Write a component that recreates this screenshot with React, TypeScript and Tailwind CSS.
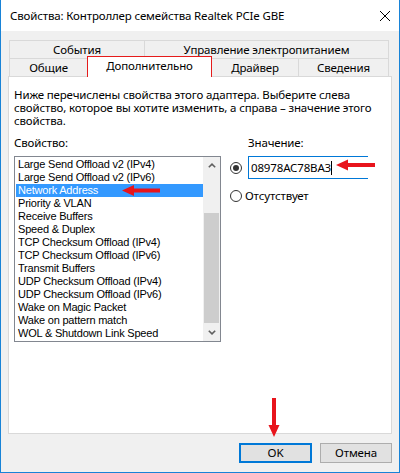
const items = [
  "Large Send Offload v2 (IPv4)",
  "Large Send Offload v2 (IPv6)",
  "Network Address",
  "Priority & VLAN",
  "Receive Buffers",
  "Speed & Duplex",
  "TCP Checksum Offload (IPv4)",
  "TCP Checksum Offload (IPv6)",
  "Transmit Buffers",
  "UDP Checksum Offload (IPv4)",
  "UDP Checksum Offload (IPv6)",
  "Wake on Magic Packet",
  "Wake on pattern match",
  "WOL & Shutdown Link Speed",
];

function Chevron({ up }: { up?: boolean }) {
  return (
    <svg width="8" height="5" viewBox="0 0 8 5">
      <path
        d={up ? "M0.8 4.3L4 1.2L7.2 4.3" : "M0.8 0.8L4 3.9L7.2 0.8"}
        fill="none"
        stroke="#606060"
        strokeWidth="1.6"
      />
    </svg>
  );
}

export default function App() {
  return (
    <div className="relative w-[400px] h-[473px] bg-[#f0f0f0] border-x border-b border-[#1883d7] flex flex-col font-['Noto_Sans',sans-serif] text-[11.5px] tracking-[-0.15px] text-black overflow-hidden">
      {/* Title bar */}
      <div className="h-[31px] shrink-0 bg-white flex items-center justify-between pl-[9px] pr-[9px]">
        <span className="leading-[14px]">Свойства: Контроллер семейства Realtek PCIe GBE</span>
        <svg width="10" height="10" viewBox="0 0 10 10">
          <path d="M0 0L10 10M10 0L0 10" stroke="#000" strokeWidth="1" />
        </svg>
      </div>

      {/* Body */}
      <div className="flex-1 flex flex-col pt-[9px] px-[7px]">
        {/* Tabs */}
        <div className="ml-[1px] w-[380px] flex flex-col">
          <div className="flex h-[18px]">
            <div className="w-[135px] border-t border-l border-[#d9d9d9] flex justify-center leading-[16px] pt-[1px]">События</div>
            <div className="flex-1 border-t border-l border-r border-[#d9d9d9] flex justify-center leading-[16px] pt-[1px]">Управление электропитанием</div>
          </div>
          <div className="flex h-[18px] items-start">
            <div className="w-[78px] h-[18px] border-t border-l border-[#d9d9d9] flex justify-center leading-[16px] pt-[1px]">Общие</div>
            <div className="relative z-10 w-[125px] h-[21px] -mt-[2px] bg-white border-t border-l border-r border-[#e51b1b] flex justify-center leading-[16px] pt-[1px]">Дополнительно</div>
            <div className="w-[86px] h-[18px] border-t border-[#d9d9d9] flex justify-center leading-[16px] pt-[1px]">Драйвер</div>
            <div className="flex-1 h-[18px] border-t border-l border-r border-[#d9d9d9] flex justify-center leading-[16px] pt-[1px]">Сведения</div>
          </div>
        </div>

        {/* Panel */}
        <div className="h-[358px] bg-white border border-[#d9d9d9] pl-[5px] pt-[11px]">
          <p className="leading-[13px] whitespace-nowrap">
            Ниже перечислены свойства этого адаптера. Выберите слева
            <br />
            свойство, которое вы хотите изменить, а справа – значение этого
            <br />
            свойства.
          </p>

          <div className="mt-[9px] flex gap-[9px]">
            {/* Left column */}
            <div className="w-[207px] flex flex-col">
              <div className="leading-[13px]">Свойство:</div>
              <div className="mt-[7px] h-[186px] border border-[#828790] bg-white flex">
                <div className="flex-1 pt-[1px] pl-[1px] font-['Liberation_Sans',Arial,sans-serif] text-[11px] tracking-[-0.2px]">
                  {items.map((it, i) => (
                    <div
                      key={it}
                      className={
                        i === 2
                          ? "h-[13px] leading-[13px] pl-[2px] whitespace-nowrap bg-[#3399ff] text-white"
                          : "h-[13px] leading-[13px] pl-[2px] whitespace-nowrap"
                      }
                    >
                      {it}
                    </div>
                  ))}
                </div>
                <div className="w-[17px] bg-[#f0f0f0] flex flex-col">
                  <div className="h-[17px] flex items-center justify-center">
                    <Chevron up />
                  </div>
                  <div className="h-[39px]" />
                  <div className="h-[110px] mx-[1px] bg-[#cdcdcd]" />
                  <div className="flex-1" />
                  <div className="h-[17px] flex items-center justify-center">
                    <Chevron />
                  </div>
                </div>
              </div>
            </div>

            {/* Right column */}
            <div className="flex-1 flex flex-col">
              <div className="leading-[13px] pl-[18px]">Значение:</div>
              <div className="mt-[7px] flex items-center h-[23px]">
                <div className="w-[12px] h-[12px] rounded-full border border-[#333333] bg-white flex items-center justify-center">
                  <div className="w-[6px] h-[6px] rounded-full bg-[#333333]" />
                </div>
                <div className="ml-[6px] w-[120px] h-[23px] border border-r-0 border-[#0078d7] bg-white flex items-center pl-[2px]">
                  <span className="leading-[14px]">08978AC78BA3</span>
                  <span className="w-px h-[14px] bg-black" />
                </div>
              </div>
              <div className="mt-[10px] flex items-center h-[14px]">
                <div className="w-[12px] h-[12px] rounded-full border border-[#333333] bg-white" />
                <span className="ml-[3px] leading-[14px]">Отсутствует</span>
              </div>
            </div>
          </div>
        </div>

        {/* Buttons */}
        <div className="mt-[9px] flex justify-end gap-[8px]">
          <div className="w-[73px] h-[20px] border-2 border-[#0078d7] bg-[#e1e1e1] flex items-center justify-center leading-[14px]">OK</div>
          <div className="w-[72px] h-[20px] border border-[#adadad] bg-[#e1e1e1] flex items-center justify-center leading-[14px]">Отмена</div>
        </div>
      </div>

      {/* Red annotation arrows */}
      <svg className="absolute -left-px top-0 pointer-events-none" width="400" height="473" viewBox="0 0 400 473">
        <g fill="#e8141c">
          <rect x="132" y="188.5" width="28" height="4" />
          <polygon points="122,190.5 134,185 134,196" />
          <rect x="346" y="163" width="29" height="4" />
          <polygon points="336,165 348,159.5 348,170.5" />
          <rect x="272" y="398" width="4" height="28" />
          <polygon points="274,437 268.5,425 279.5,425" />
        </g>
      </svg>
    </div>
  );
}
